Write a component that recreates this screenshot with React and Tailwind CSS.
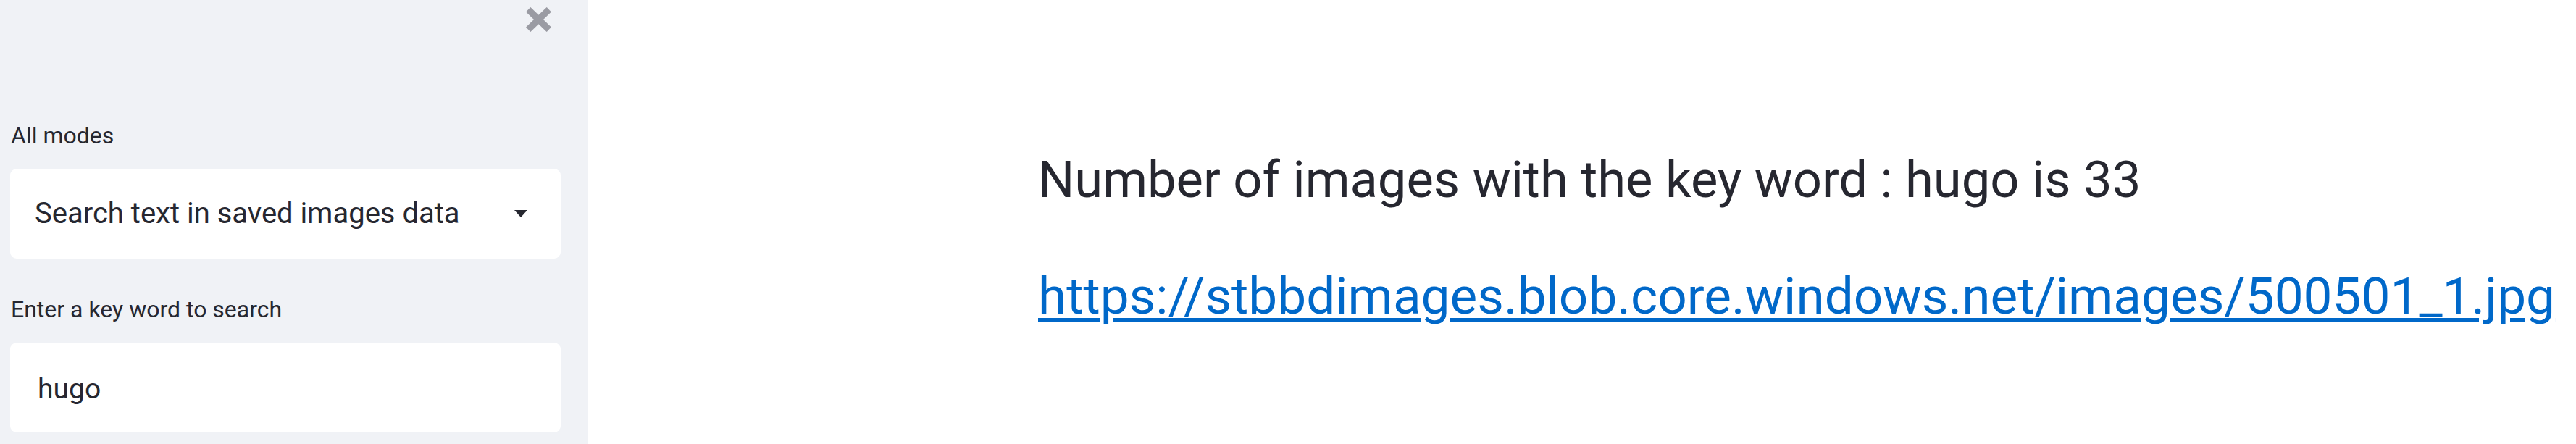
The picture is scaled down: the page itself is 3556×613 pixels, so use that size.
import React from 'react';

const font = { fontFamily: 'Roboto, "Noto Sans", sans-serif' };

const CloseIcon = () => (
    <svg width="35" height="34" viewBox="0 0 35 34">
        <line x1="3.2" y1="3.2" x2="31.8" y2="30.8" stroke="#9a9ba3" strokeWidth="9" />
        <line x1="31.8" y1="3.2" x2="3.2" y2="30.8" stroke="#9a9ba3" strokeWidth="9" />
    </svg>
);

const Caret = () => (
    <svg width="18" height="10" viewBox="0 0 18 10">
        <polygon points="0,0 18,0 9,10" fill="#262730" />
    </svg>
);

const Sidebar = () => {
    return (
        <div className="w-[812px] shrink-0 h-[613px] bg-[#f0f2f6] flex flex-col pl-[14px] pr-[38px] text-[#262730]">
            {/* Close button */}
            <div className="flex justify-end pt-[10px] pr-[13px] h-[44px]">
                <CloseIcon />
            </div>

            <label className="mt-[127px] pl-[1px] text-[32px] leading-[32px] h-[32px]">
                All modes
            </label>
            <div className="mt-[30px] h-[124px] bg-white rounded-[9px] flex items-center justify-between pl-[34px] pr-[46px]">
                <span className="text-[40px] leading-[40px]">
                    Search text in saved images data
                </span>
                <Caret />
            </div>

            <label className="mt-[54px] pl-[1px] text-[32px] leading-[32px] h-[32px]">
                Enter a key word to search
            </label>
            <div className="mt-[30px] h-[124px] bg-white rounded-[9px] flex items-center pl-[38px]">
                <span className="text-[39px] leading-[39px] mt-[5px]">hugo</span>
            </div>
        </div>
    );
};

const App = () => {
    return (
        <div className="flex w-full h-[613px] bg-white overflow-hidden" style={font}>
            <Sidebar />
            <main className="flex-1 flex flex-col pl-[621px] pt-[213px]">
                <p className="text-[70.5px] leading-[70px] text-[#262730] whitespace-nowrap">
                    Number of images with the key word : hugo is 33
                </p>
                <a
                    href="#"
                    className="mt-[90px] text-[71.1px] leading-[71px] text-[#0068c9] underline decoration-[6px] underline-offset-[6px] whitespace-nowrap"
                >
                    https://stbbdimages.blob.core.windows.net/images/500501_1.jpg
                </a>
            </main>
        </div>
    );
};

export default App;
